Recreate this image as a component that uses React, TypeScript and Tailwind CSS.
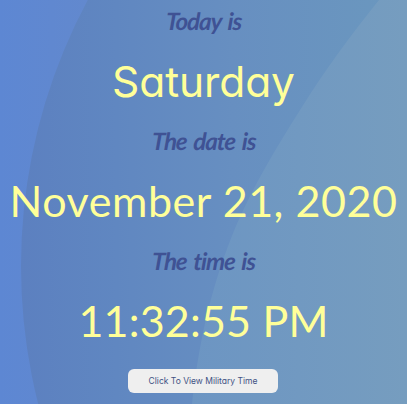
import React from 'react';
import type { ReactNode } from 'react';

function Backdrop() {
  return (
    <svg className="absolute inset-0 h-full w-full" viewBox="0 0 407 404" preserveAspectRatio="none" aria-hidden="true">
      <defs>
        <linearGradient id="base" x1="0" x2="1" y1="0" y2="0">
          <stop offset="0" stopColor="#5d87d3" />
          <stop offset="0.25" stopColor="#6389cd" />
          <stop offset="1" stopColor="#6b98bd" />
        </linearGradient>
        <linearGradient id="middle" gradientUnits="userSpaceOnUse" x1="20" x2="407" y1="0" y2="0">
          <stop offset="0" stopColor="#5c80c0" />
          <stop offset="0.25" stopColor="#6087c1" />
          <stop offset="0.55" stopColor="#678fc1" />
          <stop offset="1" stopColor="#6b98be" />
        </linearGradient>
        <linearGradient id="front" gradientUnits="userSpaceOnUse" x1="190" x2="407" y1="0" y2="0">
          <stop offset="0" stopColor="#6c95c3" />
          <stop offset="1" stopColor="#769dbf" />
        </linearGradient>
      </defs>
      <rect width="407" height="404" fill="url(#base)" />
      <circle cx="584" cy="266" r="563" fill="url(#middle)" />
      <path d="M379 0C350 36 325 70 302 107C274 151 254 185 236 226C214 279 200 332 192 404H407V0Z" fill="url(#front)" />
    </svg>
  );
}

function Label({ children }: { children: ReactNode }) {
  return (
    <h3 className="h-10 -skew-x-3 pt-px text-center font-['Lato'] text-[24px] leading-10 font-bold tracking-[-1px] whitespace-nowrap text-[#3f5294] italic [word-spacing:2.5px]">
      {children}
    </h3>
  );
}

export default function App() {
  return (
    <main className="relative h-[404px] w-full overflow-hidden font-['Lato',sans-serif]">
      <Backdrop />
      <div className="relative flex flex-col items-center whitespace-nowrap text-[#ffff99]">
        <Label>Today is</Label>
        <h1 className="h-20 pt-0.5 font-['Inter'] text-[42.5px] leading-20 tracking-[-0.1px] [font-feature-settings:'cv11']">Saturday</h1>
        <Label>The date is</Label>
        <h1 className="h-20 pt-px text-[43px] leading-20 tracking-[0.55px]">November 21, 2020</h1>
        <Label>The time is</Label>
        <h1 className="h-20 pt-px text-[43px] leading-20 tracking-[0.2px]">11:32:55 PM</h1>
        <button className="mt-[9px] mr-px h-6 w-[150px] rounded-md bg-[#efefef] font-['Inter'] text-[8.5px] leading-6 text-[#3f5284] [font-feature-settings:'cv11']">
          Click To View Military Time
        </button>
      </div>
    </main>
  );
}
